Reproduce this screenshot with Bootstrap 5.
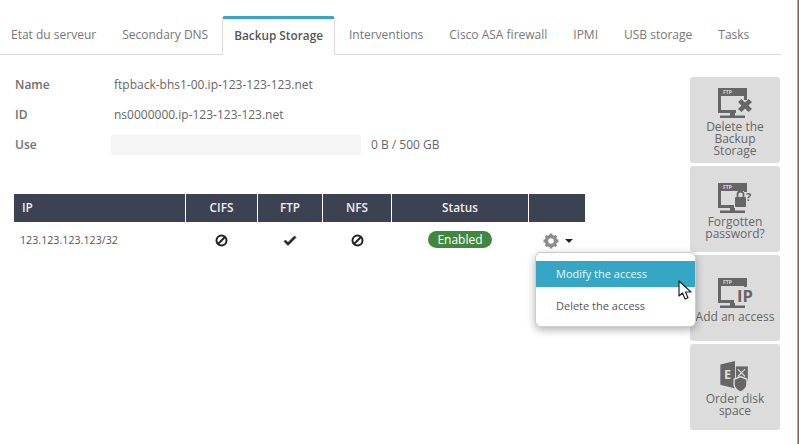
<!DOCTYPE html>
<html lang="en">
<head>
  <meta charset="UTF-8">
  <title>Backup Storage</title>
  <meta name="viewport" content="width=device-width, initial-scale=1">
  <link href="https://cdn.jsdelivr.net/npm/bootstrap@5.3.0/dist/css/bootstrap.min.css" rel="stylesheet">
  <style>
    html, body { height: 444px; overflow: hidden; }
    body {
      background: #fff;
      font-family: "Open Sans", "Noto Sans", sans-serif;
      font-size: 12px;
      color: #5f5f5f;
      border-right: 1px solid #8a5f55;
      box-shadow: inset -1px 0 0 #aaa;
      width: 799px;
    }
    .page-wrap { padding: 16px 16px 0 0; }

    .tab-bar { border-bottom: 1px solid #ddd; height: 39px; }
    .tab-bar .nav-link {
      font-size: 12px; color: #777; padding: 10px 12px 0; margin: 0 2px 0 0;
      border: 0; border-radius: 0; height: 38px; background: none;
    }
    .tab-bar li:first-child .nav-link { padding-left: 11px; }
    .tab-bar .nav-link.active {
      font-size: 11.8px; color: #555; font-weight: 600; height: 39px; margin-bottom: -1px;
      background: #fff; padding: 8px 11px 0;
      border: 1px solid #ddd; border-top: 3px solid #35a7c4; border-bottom: 0;
      border-radius: 3px 3px 0 0;
    }

    .info-list { padding-top: 15px; }
    .info-row { height: 30px; padding-left: 15px; align-items: center; }
    .info-label { width: 96px; font-weight: 600; color: #707070; }
    .info-value { color: #666; }
    .info-value.shifted { padding-left: 3px; }
    .use-track { width: 250px; height: 20px; background: #f5f5f5; border-radius: 3px; margin-right: 10px; }

    .access-table { width: 571px; margin: 34px 0 0 14px; border-collapse: collapse; table-layout: fixed; }
    .access-table th {
      background: #3c4252; color: #eee; font-weight: 600; font-size: 11.8px;
      height: 28px; padding: 0 0 0 1px; text-align: center; border-right: 1px solid #fff;
    }
    .access-table th:first-child { text-align: left; padding-left: 8px; }
    .access-table th:last-child { border-right: 0; }
    .access-table td { height: 36px; padding: 0 0 0 1px; text-align: center; color: #555; }
    .access-table td:first-child { text-align: left; padding-left: 6px; font-size: 10.7px; }
    .access-table svg { display: inline-block; vertical-align: middle; }
    .pill-enabled {
      display: inline-block; background: #42873f; color: #fff; font-size: 12px; font-weight: 500;
      line-height: 17px; padding: 0 9px; border-radius: 9px;
    }
    .gear-cell { padding-left: 2px !important; }
    .caret-down {
      display: inline-block; width: 0; height: 0; margin-left: 6px; vertical-align: middle;
      border: 4px solid transparent; border-top: 4px solid #222; border-bottom: 0;
    }

    .action-menu {
      display: block; position: absolute; left: 535px; top: 252px; width: 161px; height: 75px; margin: 0;
      padding: 8px 0 0; background: #fff; border: 1px solid #ccc; border-radius: 6px;
      box-shadow: 0 3px 9px rgba(0,0,0,.3); z-index: 5;
    }
    .action-menu .dropdown-item { padding: 0 20px; color: #555; line-height: 26px; font-size: 11px; }
    .action-menu .dropdown-item.hovered { background: #35a7c4; color: #e8f6fa; margin-bottom: 6px; }
    .cursor-arrow { position: absolute; left: 678px; top: 280px; z-index: 6; }

    .side-actions { width: 90px; margin: 22px 2px 0 0; gap: 3px; }
    .side-btn {
      width: 90px; height: 86px; background: #dcdcdc; border-radius: 3px; color: #666;
      display: flex; flex-direction: column; justify-content: center; align-items: center;
      text-align: center; font-size: 12px; line-height: 12px; padding-top: 3px; white-space: nowrap;
    }
    .side-btn svg { display: block; margin: 0 0 2px; }
    .side-btn:last-child svg { margin-bottom: 0; }
    .icon-tag { font-size: 5px; font-weight: 700; fill: #dcdcdc; font-family: "Open Sans", sans-serif; }
    .icon-big { font-weight: 700; fill: #666; font-family: "Open Sans", sans-serif; }
  </style>
</head>
<body>
  <div class="page-wrap">
    <ul class="nav tab-bar flex-nowrap">
      <li class="nav-item"><a class="nav-link" href="#">Etat du serveur</a></li>
      <li class="nav-item"><a class="nav-link" href="#">Secondary DNS</a></li>
      <li class="nav-item"><a class="nav-link active" href="#">Backup Storage</a></li>
      <li class="nav-item"><a class="nav-link" href="#">Interventions</a></li>
      <li class="nav-item"><a class="nav-link" href="#">Cisco ASA firewall</a></li>
      <li class="nav-item"><a class="nav-link" href="#">IPMI</a></li>
      <li class="nav-item"><a class="nav-link" href="#">USB storage</a></li>
      <li class="nav-item"><a class="nav-link" href="#">Tasks</a></li>
    </ul>

    <div class="d-flex justify-content-between">
      <div class="flex-grow-1">
        <div class="info-list">
          <div class="d-flex info-row"><div class="info-label">Name</div><div class="info-value shifted">ftpback-bhs1-00.ip-123-123-123.net</div></div>
          <div class="d-flex info-row"><div class="info-label">ID</div><div class="info-value shifted">ns0000000.ip-123-123-123.net</div></div>
          <div class="d-flex info-row"><div class="info-label">Use</div><div class="use-track"></div><div class="info-value">0 B / 500 GB</div></div>
        </div>

        <table class="access-table">
          <colgroup><col style="width:171px"><col style="width:72px"><col style="width:65px"><col style="width:69px"><col style="width:137px"><col style="width:57px"></colgroup>
          <thead><tr><th>IP</th><th>CIFS</th><th>FTP</th><th>NFS</th><th>Status</th><th></th></tr></thead>
          <tbody>
            <tr>
              <td>123.123.123.123/32</td>
              <td><svg width="13" height="13" viewBox="0 0 13 13"><circle cx="6.500" cy="6.500" r="5" fill="none" stroke="#222" stroke-width="2"/><path d="M3 10 10 3" stroke="#222" stroke-width="2"/></svg></td>
              <td><svg width="14" height="12" viewBox="0 0 14 12"><path d="M1 6.500 5 10.500 13 2.500 11.500 1 5 7.500 2.500 5Z" fill="#222" stroke="#222" stroke-width=".6"/></svg></td>
              <td><svg width="13" height="13" viewBox="0 0 13 13"><circle cx="6.500" cy="6.500" r="5" fill="none" stroke="#222" stroke-width="2"/><path d="M3 10 10 3" stroke="#222" stroke-width="2"/></svg></td>
              <td><span class="pill-enabled">Enabled</span></td>
              <td class="gear-cell">
                <svg width="16" height="16" viewBox="0 0 16 16"><circle cx="8" cy="8" r="4.500" fill="none" stroke="#8c8c8c" stroke-width="3.400"/><path d="M8 .5V3M8 13v2.500M.5 8H3M13 8h2.500M2.700 2.700 4.500 4.500M11.500 11.500l1.800 1.800M13.300 2.700 11.500 4.500M4.500 11.500l-1.800 1.800" stroke="#8c8c8c" stroke-width="2.800"/></svg><span class="caret-down"></span>
              </td>
            </tr>
          </tbody>
        </table>
      </div>

      <div class="side-actions d-flex flex-column flex-shrink-0">
        <div class="side-btn">
          <svg width="36" height="32" viewBox="0 0 36 32"><path d="M1 1h29v12h-3V9H4v14h15v3H1Z" fill="#666"/><text class="icon-tag" x="6" y="6.500">FTP</text><path d="M13 26h5v3h-5zM3 28.500h25V31H3z" fill="#666"/><path d="M21 15l3.500-3 3.500 3.500 3.500-3.500 3.500 3-3.500 3.500 3.500 3.500-3.500 3-3.500-3.500-3.500 3.500-3.500-3 3.500-3.500Z" fill="#666"/></svg>
          Delete the<br>Backup<br>Storage
        </div>
        <div class="side-btn">
          <svg width="36" height="32" viewBox="0 0 36 32"><path d="M1 1h29v9h-3V9H4v14h13v3H1Z" fill="#666"/><text class="icon-tag" x="6" y="6.500">FTP</text><path d="M13 26h5v3h-5zM3 28.500h25V31H3z" fill="#666"/><rect x="18" y="15" width="11" height="10" rx="1" fill="#666"/><path d="M20.500 15v-2.500a3 3 0 0 1 6 0V15" fill="none" stroke="#666" stroke-width="1.800"/><text class="icon-big" x="29" y="19" font-size="11">?</text></svg>
          <span>Forgotten<br>password?</span>
        </div>
        <div class="side-btn">
          <svg width="36" height="32" viewBox="0 0 36 32"><path d="M1 1h29v9h-3V9H4v14h13v3H1Z" fill="#666"/><text class="icon-tag" x="6" y="6.500">FTP</text><path d="M13 26h5v3h-5zM3 28.500h25V31H3z" fill="#666"/><text class="icon-big" x="20" y="25" font-size="16.500">IP</text></svg>
          <span>Add an access</span>
        </div>
        <div class="side-btn">
          <svg width="36" height="33" viewBox="0 0 36 36"><path d="M2 5 18 1v30L2 27Z" fill="#666"/><path d="M19 7h13v16H19Z" fill="#666"/><text x="6" y="21" font-size="14" font-weight="700" fill="#dcdcdc" font-family="Open Sans">E</text><path d="M21 10l8 8M29 10l-8 8" stroke="#dcdcdc" stroke-width="1.200"/><path d="M17 21l7-3 7 3v6c0 4-4 6.500-7 8-3-1.500-7-4-7-8Z" fill="#666" stroke="#dcdcdc" stroke-width="1.500"/></svg>
          Order disk<br>space
        </div>
      </div>
    </div>
  </div>

  <div class="dropdown-menu action-menu">
    <a class="dropdown-item hovered" href="#">Modify the access</a>
    <a class="dropdown-item" href="#">Delete the access</a>
  </div>
  <svg class="cursor-arrow" width="15" height="21" viewBox="0 0 15 21"><path d="M1 1v15l3.500-3 2.500 6 3-1.300-2.500-5.700H13Z" fill="#fff" stroke="#222" stroke-width="1.200" stroke-linejoin="round"/></svg>

  <script src="https://cdn.jsdelivr.net/npm/bootstrap@5.3.0/dist/js/bootstrap.bundle.min.js"></script>
</body>
</html>
